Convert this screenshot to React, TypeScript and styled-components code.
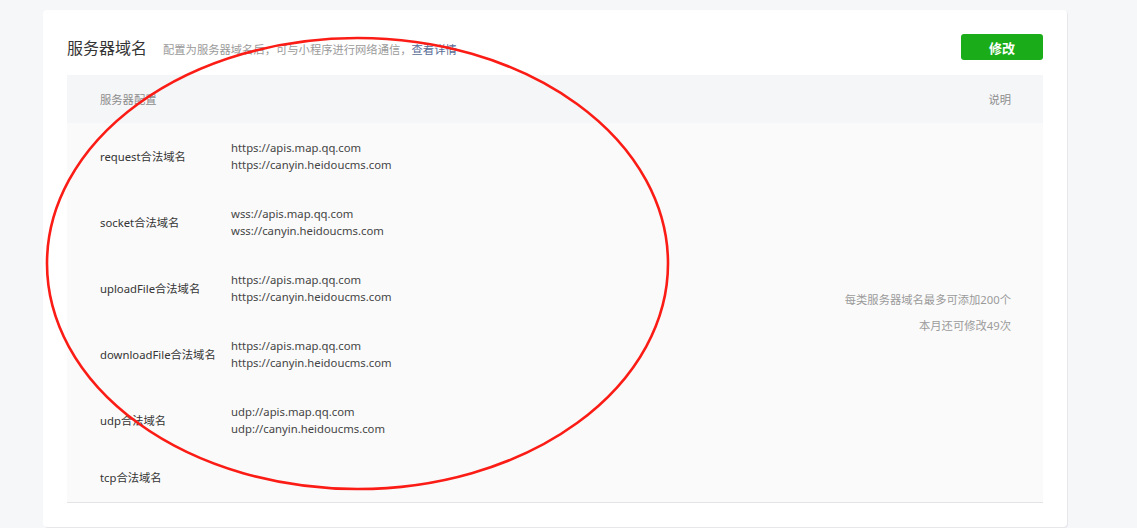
import React from "react";
import styled, { createGlobalStyle } from "styled-components";

const GlobalStyle = createGlobalStyle`
  html, body {
    margin: 0;
    padding: 0;
    background: #f6f7f9;
    font-family: "Noto Sans", "Noto Sans CJK SC", sans-serif;
    color: #353535;
  }
`;

type DomainRow = {
  label: string;
  urls: string[];
};

const rows: DomainRow[] = [
  {
    label: "request合法域名",
    urls: ["https://apis.map.qq.com", "https://canyin.heidoucms.com"]
  },
  {
    label: "socket合法域名",
    urls: ["wss://apis.map.qq.com", "wss://canyin.heidoucms.com"]
  },
  {
    label: "uploadFile合法域名",
    urls: ["https://apis.map.qq.com", "https://canyin.heidoucms.com"]
  },
  {
    label: "downloadFile合法域名",
    urls: ["https://apis.map.qq.com", "https://canyin.heidoucms.com"]
  },
  {
    label: "udp合法域名",
    urls: ["udp://apis.map.qq.com", "udp://canyin.heidoucms.com"]
  },
  { label: "tcp合法域名", urls: [] }
];

export default function App() {
  return (
    <>
      <GlobalStyle />
      <Page>
        <Card>
          <Header>
            <TitleGroup>
              <Title>服务器域名</Title>
              <Subtitle>
                配置为服务器域名后，可与小程序进行网络通信，
                <DetailLink href="#">查看详情</DetailLink>
              </Subtitle>
            </TitleGroup>
            <EditButton>修改</EditButton>
          </Header>
          <Table>
            <HeadRow>
              <span>服务器配置</span>
              <span>说明</span>
            </HeadRow>
            <Body>
              {rows.map((r, i) => (
                <React.Fragment key={r.label}>
                  <Label style={{ gridRow: i + 1 }}>{r.label}</Label>
                  <Values style={{ gridRow: i + 1 }}>
                    {r.urls.map(u => (
                      <div key={u}>{u}</div>
                    ))}
                  </Values>
                </React.Fragment>
              ))}
              <Note>
                <div>每类服务器域名最多可添加200个</div>
                <div>本月还可修改49次</div>
              </Note>
            </Body>
          </Table>
        </Card>
        <Annotation width="1137" height="528" viewBox="0 0 1137 528">
          <ellipse
            cx="357.5"
            cy="263.5"
            rx="310.5"
            ry="225.5"
            fill="none"
            stroke="#fb1c16"
            strokeWidth="2.6"
          />
        </Annotation>
      </Page>
    </>
  );
}

const Page = styled.div`
  position: relative;
  width: 1137px;
  height: 528px;
  padding: 10px 0 0 43px;
  box-sizing: border-box;
  overflow: hidden;
`;

const Card = styled.div`
  width: 1024px;
  box-sizing: border-box;
  padding: 24px;
  background: #fff;
  border-radius: 4px;
  box-shadow: 1px 1px 0 #e7e7eb;
`;

const Header = styled.div`
  display: flex;
  align-items: center;
  justify-content: space-between;
  height: 26px;
  margin-bottom: 15px;
`;

const TitleGroup = styled.div`
  display: flex;
  align-items: baseline;
  gap: 16px;
`;

const Title = styled.h2`
  margin: 0;
  font-size: 16px;
  font-weight: 400;
  color: #353535;
`;

const Subtitle = styled.span`
  font-size: 11.3px;
  color: #9a9a9a;
`;

const DetailLink = styled.a`
  color: #576b95;
  text-decoration: none;
`;

const EditButton = styled.button`
  width: 82px;
  height: 26px;
  border: none;
  border-radius: 3px;
  background: #1aad19;
  color: #fff;
  font-family: inherit;
  font-size: 13px;
  font-weight: 600;
  cursor: pointer;
`;

const Table = styled.div`
  background: #fafafa;
  border-bottom: 1px solid #e4e4e6;
  font-size: 11.3px;
`;

const HeadRow = styled.div`
  display: flex;
  align-items: center;
  justify-content: space-between;
  height: 48px;
  padding: 0 32px 0 33px;
  background: #f5f6f8;
  color: #8d8d8d;
`;

const Body = styled.div`
  display: grid;
  grid-template-columns: 131px 1fr auto;
  padding: 0 32px 0 33px;
  line-height: 17px;
`;

const Label = styled.div`
  grid-column: 1;
  align-self: center;
  padding: 16px 0;
  color: #353535;
  white-space: nowrap;
`;

const Values = styled.div`
  grid-column: 2;
  padding: 16px 0;
  color: #454545;
`;

const Note = styled.div`
  grid-column: 3;
  grid-row: 1 / span 6;
  align-self: center;
  text-align: right;
  line-height: 26px;
  color: #9a9a9a;
  padding-top: 1px;
`;

const Annotation = styled.svg`
  position: absolute;
  left: 0;
  top: 0;
  pointer-events: none;
`;
